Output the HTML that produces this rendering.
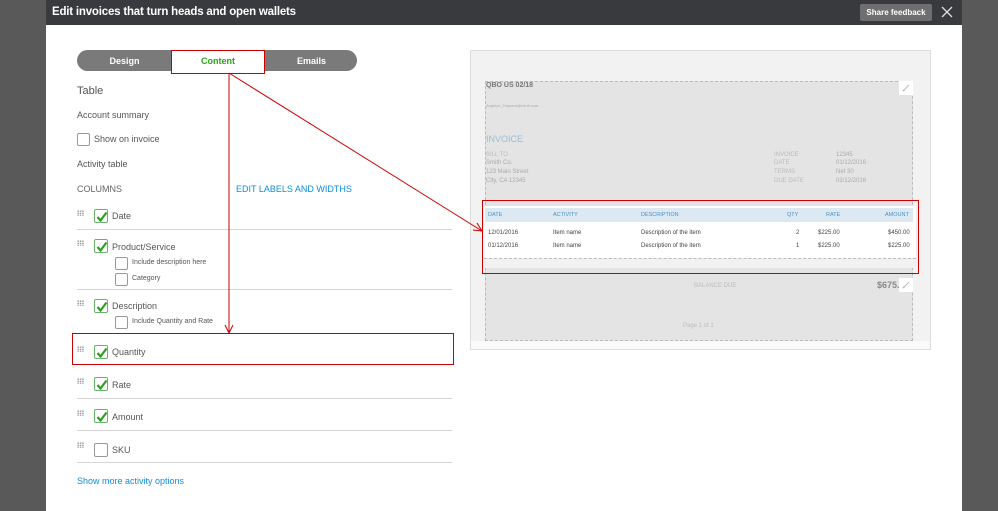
<!DOCTYPE html>
<html><head><meta charset="utf-8"><style>
*{margin:0;padding:0;box-sizing:border-box}
body{width:998px;height:511px;overflow:hidden;background:#595959;font-family:"Liberation Sans",sans-serif;position:relative}
.a{position:absolute}
.t{position:absolute;font-size:9px;color:#555;white-space:nowrap}
.cb{position:absolute;width:13px;height:13px;border:1px solid #999;border-radius:2px;background:#fff}
.ck{position:absolute;width:14px;height:14px;border:1px solid #6bb36b;border-radius:2px;background:#fff}
.ck svg{position:absolute;left:0;top:0}
.dots{position:absolute;width:7px;height:6px;background:radial-gradient(circle,#999 0.8px,transparent 1px) 0 0/2.4px 2.4px}
.ln{position:absolute;left:77px;width:375px;height:1px;background:#d6d6d6}
.p{position:absolute;font-size:6px;color:#aaa;white-space:nowrap}
.th{position:absolute;font-size:5.5px;color:#4a90c2;top:212px}
.td{position:absolute;font-size:6px;color:#444}
</style></head><body>
<div class="a" style="left:46px;top:0;width:916px;height:25px;background:#393a3d"></div>
<div class="a" style="left:52px;top:6px;color:#fff;font-size:11.5px;font-weight:bold;letter-spacing:-0.2px">Edit invoices that turn heads and open wallets</div>
<div class="a" style="left:860px;top:4px;width:72px;height:17px;background:#6e6e6e;border-radius:2px;color:#fff;font-size:8px;font-weight:bold;text-align:center;line-height:17px">Share feedback</div>
<svg class="a" style="left:941px;top:6px" width="12" height="12"><path d="M1 1L11 11M11 1L1 11" stroke="#ddd" stroke-width="1.3"/></svg>
<div class="a" style="left:46px;top:25px;width:916px;height:486px;background:#fff"></div>

<div class="a" style="left:77px;top:50px;width:280px;height:21px;background:#7a7a7a;border-radius:11px"></div>
<div class="a" style="left:77px;top:56px;width:95px;text-align:center;color:#fff;font-size:9px;font-weight:bold">Design</div>
<div class="a" style="left:264px;top:56px;width:95px;text-align:center;color:#fff;font-size:9px;font-weight:bold">Emails</div>
<div class="a" style="left:171px;top:50px;width:94px;height:24px;background:#fff;border:1px solid #c00"></div>
<div class="a" style="left:171px;top:56px;width:94px;text-align:center;color:#2ca01c;font-size:9px;font-weight:bold">Content</div>

<div class="t" style="left:77px;top:85px;font-size:11px;color:#555">Table</div>
<div class="t" style="left:77px;top:110px">Account summary</div>
<div class="cb" style="left:77px;top:133px"></div>
<div class="t" style="left:94px;top:134px">Show on invoice</div>
<div class="t" style="left:77px;top:159px">Activity table</div>
<div class="t" style="left:77px;top:184px;color:#666">COLUMNS</div>
<div class="t" style="left:236px;top:184px;color:#0d8fd8">EDIT LABELS AND WIDTHS</div>

<div class="dots" style="left:77px;top:210px"></div>
<div class="ck" style="left:94px;top:209px"><svg width="14" height="14"><path d="M2.5 7L5.5 10.5L11.5 2.5" stroke="#2ca01c" stroke-width="2.2" fill="none"/></svg></div>
<div class="t" style="left:112px;top:211px">Date</div>
<div class="ln" style="top:229px"></div>

<div class="dots" style="left:77px;top:240px"></div>
<div class="ck" style="left:94px;top:239px"><svg width="14" height="14"><path d="M2.5 7L5.5 10.5L11.5 2.5" stroke="#2ca01c" stroke-width="2.2" fill="none"/></svg></div>
<div class="t" style="left:112px;top:242px">Product/Service</div>
<div class="cb" style="left:115px;top:257px"></div>
<div class="t" style="left:132px;top:259px;font-size:7px">Include description here</div>
<div class="cb" style="left:115px;top:273px"></div>
<div class="t" style="left:132px;top:275px;font-size:7px">Category</div>
<div class="ln" style="top:289px"></div>

<div class="dots" style="left:77px;top:300px"></div>
<div class="ck" style="left:94px;top:299px"><svg width="14" height="14"><path d="M2.5 7L5.5 10.5L11.5 2.5" stroke="#2ca01c" stroke-width="2.2" fill="none"/></svg></div>
<div class="t" style="left:112px;top:301px">Description</div>
<div class="cb" style="left:115px;top:316px"></div>
<div class="t" style="left:132px;top:318px;font-size:7px">Include Quantity and Rate</div>

<div class="a" style="left:72px;top:333px;width:382px;height:32px;border:1px solid #c00"></div>
<div class="dots" style="left:77px;top:346px"></div>
<div class="ck" style="left:94px;top:345px"><svg width="14" height="14"><path d="M2.5 7L5.5 10.5L11.5 2.5" stroke="#2ca01c" stroke-width="2.2" fill="none"/></svg></div>
<div class="t" style="left:112px;top:347px">Quantity</div>

<div class="dots" style="left:77px;top:378px"></div>
<div class="ck" style="left:94px;top:377px"><svg width="14" height="14"><path d="M2.5 7L5.5 10.5L11.5 2.5" stroke="#2ca01c" stroke-width="2.2" fill="none"/></svg></div>
<div class="t" style="left:112px;top:380px">Rate</div>
<div class="ln" style="top:398px"></div>
<div class="dots" style="left:77px;top:410px"></div>
<div class="ck" style="left:94px;top:409px"><svg width="14" height="14"><path d="M2.5 7L5.5 10.5L11.5 2.5" stroke="#2ca01c" stroke-width="2.2" fill="none"/></svg></div>
<div class="t" style="left:112px;top:412px">Amount</div>
<div class="ln" style="top:430px"></div>
<div class="dots" style="left:77px;top:442px"></div>
<div class="cb" style="left:94px;top:443px;width:14px;height:14px"></div>
<div class="t" style="left:112px;top:445px">SKU</div>
<div class="ln" style="top:462px"></div>
<div class="t" style="left:77px;top:476px;color:#0d8fd8">Show more activity options</div>

<div class="a" style="left:470px;top:50px;width:461px;height:300px;background:#fafafa;border:1px solid #ddd"></div>
<div class="a" style="left:471px;top:51px;width:459px;height:290px;background:#f2f2f2"></div>
<div class="a" style="left:485px;top:81px;width:428px;height:260px;background:#e4e4e4;border:1px dashed #bbb"></div>
<div class="a" style="left:899px;top:81px;width:14px;height:14px;background:#fff"></div>
<svg class="a" style="left:901px;top:83px" width="10" height="10"><path d="M2 8L8 2M2 8L2.5 6.5M2 8L3.5 7.5" stroke="#bbb" fill="none"/></svg>
<div class="p" style="left:486px;top:82px;font-size:7px;color:#777;font-weight:bold">QBO US 02/18</div>
<div class="p" style="left:486px;top:103px;font-size:4px">Angelyn_Toquero@intuit.com</div>
<div class="p" style="left:486px;top:134px;font-size:9px;color:#9bbdd6">INVOICE</div>
<div class="p" style="left:486px;top:152px;color:#bbb">BILL TO</div>
<div class="p" style="left:486px;top:160px">Smith Co.</div>
<div class="p" style="left:486px;top:169px">123 Main Street</div>
<div class="p" style="left:486px;top:178px">City, CA 12345</div>
<div class="p" style="left:774px;top:152px;color:#bbb">INVOICE</div>
<div class="p" style="left:774px;top:160px;color:#bbb">DATE</div>
<div class="p" style="left:774px;top:169px;color:#bbb">TERMS</div>
<div class="p" style="left:774px;top:178px;color:#bbb">DUE DATE</div>
<div class="p" style="left:836px;top:152px">12345</div>
<div class="p" style="left:836px;top:160px">01/12/2016</div>
<div class="p" style="left:836px;top:169px">Net 30</div>
<div class="p" style="left:836px;top:178px">02/12/2016</div>

<div class="a" style="left:484px;top:206px;width:432px;height:62px;background:#fff"></div>
<div class="a" style="left:484px;top:258px;width:432px;height:10px;background:#f2f2f2;border-top:1px dashed #bbb"></div>
<div class="a" style="left:485px;top:208px;width:428px;height:14px;background:#dce9f2"></div>
<div class="th" style="left:488px">DATE</div>
<div class="th" style="left:553px">ACTIVITY</div>
<div class="th" style="left:641px">DESCRIPTION</div>
<div class="th" style="left:787px">QTY</div>
<div class="th" style="left:826px">RATE</div>
<div class="th" style="left:885px">AMOUNT</div>
<div class="td" style="left:488px;top:230px">12/01/2016</div>
<div class="td" style="left:553px;top:230px">Item name</div>
<div class="td" style="left:641px;top:230px">Description of the item</div>
<div class="td" style="left:796px;top:230px">2</div>
<div class="td" style="left:818px;top:230px">$225.00</div>
<div class="td" style="left:888px;top:230px">$450.00</div>
<div class="td" style="left:488px;top:243px">01/12/2016</div>
<div class="td" style="left:553px;top:243px">Item name</div>
<div class="td" style="left:641px;top:243px">Description of the item</div>
<div class="td" style="left:796px;top:243px">1</div>
<div class="td" style="left:818px;top:243px">$225.00</div>
<div class="td" style="left:888px;top:243px">$225.00</div>
<div class="a" style="left:482px;top:200px;width:437px;height:74px;border:1px solid #c00"></div>

<div class="p" style="left:694px;top:283px;color:#bbb">BALANCE DUE</div>
<div class="p" style="left:877px;top:280px;font-size:9px;color:#888;font-weight:bold">$675.</div>
<div class="a" style="left:899px;top:278px;width:14px;height:14px;background:#fff"></div>
<svg class="a" style="left:901px;top:280px" width="10" height="10"><path d="M2 8L8 2M2 8L2.5 6.5M2 8L3.5 7.5" stroke="#bbb" fill="none"/></svg>
<div class="p" style="left:683px;top:323px;color:#bbb">Page 1 of 1</div>

<svg class="a" style="left:0;top:0" width="998" height="511">
<path d="M229 73L229 332" stroke="#c00" stroke-width="1"/>
<path d="M225 325L229 333L233 325" stroke="#c00" fill="none"/>
<path d="M229 73L482 231" stroke="#c00" stroke-width="1"/>
<path d="M473 230L482 231L477 223" stroke="#c00" fill="none"/>
</svg>
</body></html>
